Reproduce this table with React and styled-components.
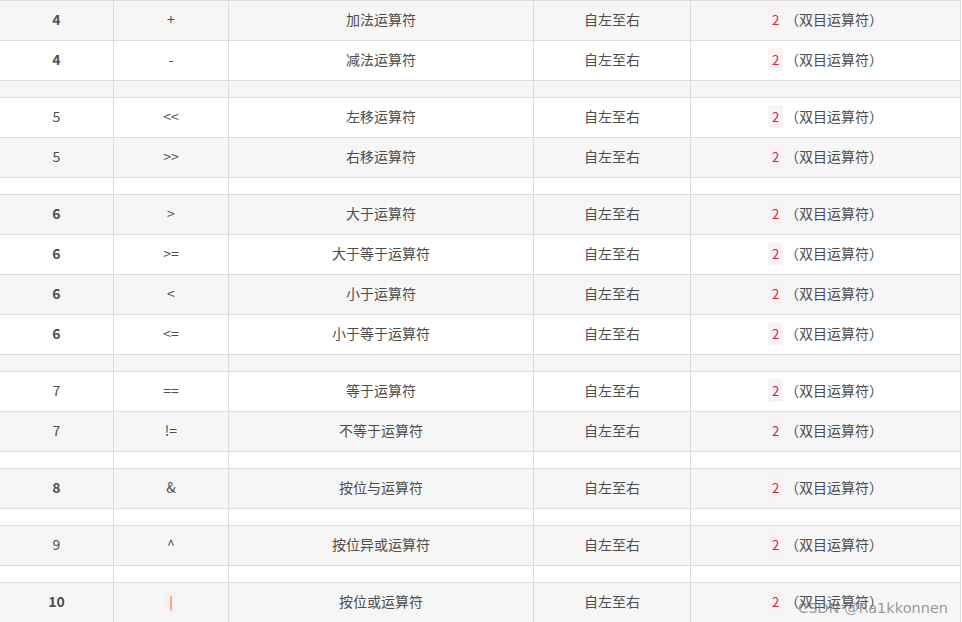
import React from 'react';
import styled, { createGlobalStyle } from 'styled-components';

const GlobalStyle = createGlobalStyle`
  html, body {
    margin: 0;
    padding: 0;
    background: #fff;
    overflow: hidden;
  }
`;

const StyledPageDiv = styled.div`
  position: relative;
  width: 962px;
  height: 622px;
  overflow: hidden;
  font-family: "Noto Sans CJK SC", "Liberation Sans", sans-serif;
  color: #4d4d4d;
`;

const StyledTable = styled.table`
  border-collapse: collapse;
  table-layout: fixed;
  width: 961px;
  margin-left: -1px;
  font-size: 14px;
`;

const StyledTr = styled.tr`
  background: #fff;
  &:nth-child(odd) {
    background: #f6f6f6;
  }
`;

const StyledTd = styled.td`
  border: 1px solid #dddddd;
  height: ${p => (p.spacer ? '16px' : '36px')};
  padding: 0 8px ${p => (p.spacer ? '0' : '3px')};
  text-align: center;
  vertical-align: middle;
  line-height: 20px;
  font-weight: ${p => (p.bold ? 'bold' : 'normal')};
`;

const StyledCode = styled.code`
  font-family: "Noto Sans CJK SC", "Liberation Sans", sans-serif;
  font-size: 13px;
  padding: 2px 4px;
  border-radius: 2px;
  background: #f9f2f4;
  color: ${p => (p.pipe ? '#e8473f' : '#c7254e')};
  margin-right: 2px;
`;

const StyledPipeCode = styled(StyledCode)`
  margin-right: 0;
`;

const StyledWatermark = styled.div`
  position: absolute;
  right: 14px;
  bottom: 6px;
  font-family: "DejaVu Sans", "Liberation Sans", sans-serif;
  font-size: 14.5px;
  color: rgba(120, 120, 120, 0.75);
  pointer-events: none;
`;

const rows = [
  { level: '4', bold: true, op: '+', name: '加法运算符' },
  { level: '4', bold: true, op: '-', name: '减法运算符' },
  null,
  { level: '5', op: '<<', name: '左移运算符' },
  { level: '5', op: '>>', name: '右移运算符' },
  null,
  { level: '6', bold: true, op: '>', name: '大于运算符' },
  { level: '6', bold: true, op: '>=', name: '大于等于运算符' },
  { level: '6', bold: true, op: '<', name: '小于运算符' },
  { level: '6', bold: true, op: '<=', name: '小于等于运算符' },
  null,
  { level: '7', op: '==', name: '等于运算符' },
  { level: '7', op: '!=', name: '不等于运算符' },
  null,
  { level: '8', bold: true, op: '&', name: '按位与运算符' },
  null,
  { level: '9', op: '^', name: '按位异或运算符' },
  null,
  { level: '10', bold: true, op: '|', name: '按位或运算符', pipe: true },
];

const App = () => (
  <StyledPageDiv>
    <GlobalStyle />
    <StyledTable>
      <colgroup>
        <col style={{ width: 114 }} />
        <col style={{ width: 115 }} />
        <col style={{ width: 305 }} />
        <col style={{ width: 157 }} />
        <col style={{ width: 270 }} />
      </colgroup>
      <tbody>
        {rows.map((r, i) =>
          r ? (
            <StyledTr key={i}>
              <StyledTd bold={r.bold}>{r.level}</StyledTd>
              <StyledTd>{r.pipe ? <StyledPipeCode pipe>|</StyledPipeCode> : r.op}</StyledTd>
              <StyledTd>{r.name}</StyledTd>
              <StyledTd>自左至右</StyledTd>
              <StyledTd>
                <StyledCode>2</StyledCode>（双目运算符）
              </StyledTd>
            </StyledTr>
          ) : (
            <StyledTr key={i}>
              <StyledTd spacer />
              <StyledTd spacer />
              <StyledTd spacer />
              <StyledTd spacer />
              <StyledTd spacer />
            </StyledTr>
          )
        )}
      </tbody>
    </StyledTable>
    <StyledWatermark>CSDN @Ra1kkonnen</StyledWatermark>
  </StyledPageDiv>
);

export default App;
